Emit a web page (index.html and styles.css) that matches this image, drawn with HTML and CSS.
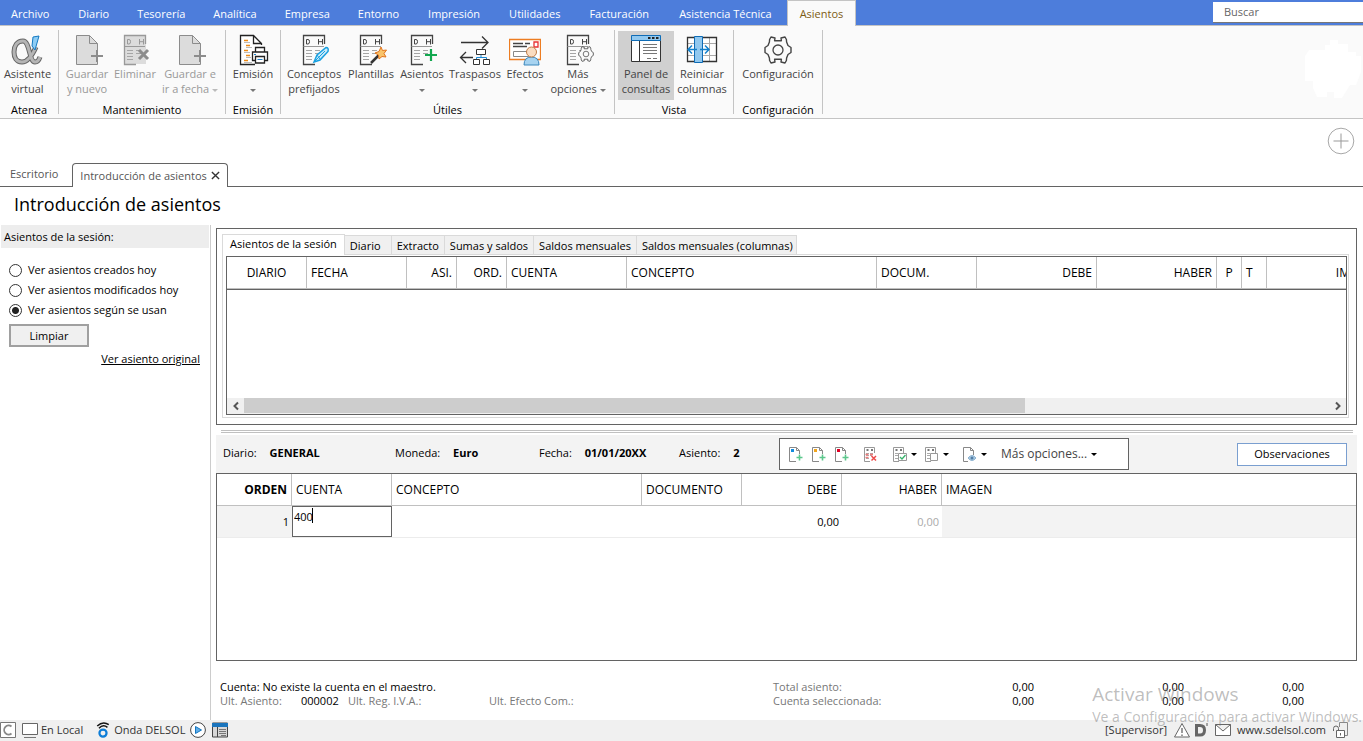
FILE: index.html
```html
<!DOCTYPE html>
<html lang="es">
<head>
<meta charset="utf-8">
<title>Introducción de asientos</title>
<link rel="stylesheet" href="styles.css">
</head>
<body>
<svg class="defs" aria-hidden="true">
  <defs>
    <symbol id="page" viewBox="0 0 32 32">
      <path d="M5.5 1.500H17.500L26.500 9.500V30.500H5.500Z" fill="#dcdcdc"/>
      <path d="M26.500 16V9.500L18.500 1.500H5.500V30.500H26.500V28M18.500 1.500V9.500H26.500" fill="none" stroke="#8c8c8c"/>
      <path d="M26 16V28M20 22H32" stroke="#8c8c8c" stroke-width="2"/>
    </symbol>
    <symbol id="ledger" viewBox="0 0 32 32">
      <path d="M26.500 10V1.500H5.500V30.500H17" fill="none" stroke="currentColor" stroke-width="1.300"/>
      <path d="M5.500 12.500H26" stroke="#999"/>
      <path d="M8.500 5.500v4.500h1.500q1.500 0 1.500-2.300t-1.500-2.200zM20.500 5v5.500M24.500 5v5.500M20.500 7.700h4" fill="none" stroke="currentColor"/>
      <path d="M8 16.500h6M8 19.500h6M8 22.500h6M8 25.500h6M17 16.500h5M17 19.500h5" stroke="#a5a5a5"/>
    </symbol>
    <symbol id="window" viewBox="0 0 32 32">
      <path d="M1.500 6.500h29v21h-29z" fill="#fff" stroke="#333"/>
      <path d="M1.500 1.500h29v5h-29z" fill="#91c8ef" stroke="#0f6cb6"/>
      <path d="M9.500 7v20" stroke="#333"/>
      <path d="M18 4h2.500M22 4h2.500M26 4h2.500" stroke="#222" stroke-width="2"/>
      <path d="M13 10.500h14M13 13.500h14M13 16.500h14M13 19.500h14M17 24.500h4M23 24.500h4" stroke="#777"/>
    </symbol>
    <symbol id="sheet" viewBox="0 0 16 16">
      <path d="M11.500 8V4.500L8.500 1.500H1.500V15.500H8M8.500 1.500V4.500H11.500" fill="#fff" stroke="#888"/>
      <path d="M11.500 8.500v6M8.500 11.500h6" stroke="#5cc78c" stroke-width="1.600"/>
      <path d="M3 3h3v3H3z" fill="currentColor"/>
    </symbol>
    <symbol id="minigrid" viewBox="0 0 16 16">
      <path d="M11.500 7V1.500H1.500V15.500H7" fill="#fff" stroke="#999"/>
      <path d="M3.500 3h2v2h-2zM8 3h2v2H8z" fill="#777"/>
      <path d="M3 7.500h3M7 7.500h3M3 9.500h3M7 9.500h2M3 12.500h3" stroke="#aaa"/>
    </symbol>
    <symbol id="gear" viewBox="-16 -16 32 32">
      <path d="M-3.400-9.300-3-12-7-13-8.400-10.500-8.600-8-10-4.500-13-2.500V2.500L-10 4.500-8.600 8-8.400 10.500-7 13-3 12-3.400 9.300H3.400L3 12 7 13 8.400 10.500 8.600 8 10 4.500 13 2.500V-2.500L10-4.500 8.600-8 8.400-10.500 7-13 3-12 3.400-9.300Z" fill="#fafafa" stroke="#444" stroke-width="1.400" stroke-linejoin="round"/>
      <circle r="5" fill="none" stroke="#444" stroke-width="1.300"/>
    </symbol>
  </defs>
</svg>

<header>
  <nav class="menu">
    <button class="file">Archivo</button><button>Diario</button><button>Tesorería</button><button>Analítica</button><button>Empresa</button><button>Entorno</button><button>Impresión</button><button>Utilidades</button><button>Facturación</button><button>Asistencia Técnica</button><button class="current">Asientos</button>
    <input class="search" type="text" placeholder="Buscar" aria-label="Buscar">
  </nav>

  <div class="ribbon">
    <section class="group g-atenea">
      <div class="tools">
        <button class="tool">
          <svg viewBox="0 0 32 32"><path d="M25 13C21 22 17 28 11 28C5 28 3 23 3 18C3 12 6 7 12 7C19 7 18 28 24 28C27 28 28 26 29 23" fill="none" stroke="#666" stroke-width="5"/><path d="M25 13C21 22 17 28 11 28C5 28 3 23 3 18C3 12 6 7 12 7C19 7 18 28 24 28C27 28 28 26 29 23" fill="none" stroke="#b5b5b5" stroke-width="3"/><path d="M22 3l6-1-4 14-3-4z" fill="#8ecdf5" stroke="#1479c2"/></svg>
          <span>Asistente<br>virtual</span></button>
      </div>
      <h2>Atenea</h2>
    </section>
    <section class="group g-mant">
      <div class="tools">
        <button class="tool off w-48"><svg><use href="#page"/></svg><span>Guardar<br>y nuevo</span></button>
        <button class="tool off w-48"><svg viewBox="0 0 32 32"><path d="M5 1h22v29H5z" fill="#dcdcdc"/><use href="#ledger"/><path d="M20 16l9 9M29 16l-9 9" stroke="#8c8c8c" stroke-width="3"/></svg><span>Eliminar</span></button>
        <button class="tool off w-62"><svg><use href="#page"/></svg><span>Guardar e<br>ir a fecha <i class="caret"></i></span></button>
      </div>
      <h2>Mantenimiento</h2>
    </section>
    <section class="group g-emision">
      <div class="tools">
        <button class="tool">
          <svg viewBox="0 0 32 32"><path d="M24.500 11V9.500L16.500 1.500H3.500V30.500H18M16.500 1.500V9.500H24.500" fill="#fff" stroke="#222" stroke-width="1.300"/><path d="M7 6.500h4M9 11.500h4M7 16.500h4M9 21.500h4M7 26.500h4" stroke="#ee8a15" stroke-width="1.400"/><path d="M7 8.500h6M9 13.500h6M7 18.500h6M9 23.500h5M7 28.500h8" stroke="#bbb"/><path d="M18.500 18v-4.500h9V18M18.500 26.500h-3v-8.500h15v8.500h-3M18.500 22.500h9v6.500h-9z" fill="#fff" stroke="#222" stroke-width="1.300"/><path d="M20.500 25.500h5M17 20.500h2" stroke="#1f83cc"/></svg>
          <span>Emisión<br><i class="caret"></i></span></button>
      </div>
      <h2>Emisión</h2>
    </section>
    <section class="group g-utiles">
      <div class="tools">
        <button class="tool w-62"><svg viewBox="0 0 32 32"><use href="#ledger"/><path d="M16 28l3-7L28 13.500q3 0 2 4L22 26z" fill="#cbeaf9" stroke="#18a0e0" stroke-width="1.500"/><path d="M19 21l3 4M16 28L27 17" stroke="#18a0e0"/></svg><span>Conceptos<br>prefijados</span></button>
        <button class="tool w-52"><svg viewBox="0 0 32 32"><use href="#ledger"/><path d="M16 29l8-8" stroke="#333" stroke-width="2.500"/><path d="M26 13l1.500 3.500 4-.5-2.500 3.500 2 3.500-4-.5-3 2.500-.5-4-3.500-2 4-1.500z" fill="#f9c46b" stroke="#e1731d"/></svg><span>Plantillas</span></button>
        <button class="tool w-50"><svg viewBox="0 0 32 32"><use href="#ledger"/><path d="M25 15v12M19 21h12" stroke="#12a84f" stroke-width="2.200"/></svg><span>Asientos<br><i class="caret"></i></span></button>
        <button class="tool w-56"><svg viewBox="0 0 32 32"><path d="M2 8.500h27M23 2.500l6 6-6 6M14 23.500H2M7 18l-5.500 5.500L7 29" fill="none" stroke="#333" stroke-width="1.300"/><path d="M17.500 15.500h9v5h-9zM14.500 25.500h6v5h-6zM24.500 25.500h6v5h-6z" fill="#fff" stroke="#333"/><path d="M22 21v2.500M17.500 25v-1.500h10V25" fill="none" stroke="#1b8ad6"/></svg><span>Traspasos<br><i class="caret"></i></span></button>
        <button class="tool w-44"><svg viewBox="0 0 32 32"><path d="M.500 5.500h31v20h-31z" fill="#fff" stroke="#ed7d22" stroke-width="1.300"/><path d="M4 9.500h10M16 9.500h5M4 12.500h14" stroke="#444" stroke-width="1.300"/><path d="M4.500 17.500h15v5h-15z" fill="none" stroke="#888"/><path d="M25 8h4v5h-4z" fill="none" stroke="#e93232" stroke-width="1.300"/><path d="M15 31q0-8 7.500-8t7.500 8z" fill="#a7d3f0" stroke="#3d88bd"/><circle cx="22.500" cy="18" r="5" fill="#fbdcc0" stroke="#c17b45"/></svg><span>Efectos<br><i class="caret"></i></span></button>
        <button class="tool w-62"><svg viewBox="0 0 32 32"><use href="#ledger"/><use href="#gear" x="15" y="11" width="18" height="18"/></svg><span>Más<br>opciones <i class="caret"></i></span></button>
      </div>
      <h2>Útiles</h2>
    </section>
    <section class="group g-vista">
      <div class="tools">
        <button class="tool pressed w-56" aria-pressed="true"><svg><use href="#window"/></svg><span>Panel de<br>consultas</span></button>
        <button class="tool w-56"><svg viewBox="0 0 32 32"><path d="M1.500 3.500h29v24h-29z" fill="#fff"/><path d="M1.500 9.500h29M1.500 21.500h29M23.500 4v23" stroke="#aaa"/><path d="M1.500 3.500h29v24h-29z" fill="none" stroke="#333" stroke-width="1.300"/><path d="M8.500 2.500h8v26h-8z" fill="#91c8ef" stroke="#0f6cb6"/><path d="M11 15.500H2.500M6 11.500l-4 4 4 4M14 15.500h8.500M19 11.500l4 4-4 4" fill="none" stroke="#1380cb" stroke-width="1.500"/></svg><span>Reiniciar<br>columnas</span></button>
      </div>
      <h2>Vista</h2>
    </section>
    <section class="group g-config">
      <div class="tools">
        <button class="tool"><svg><use href="#gear"/></svg><span>Configuración</span></button>
      </div>
      <h2>Configuración</h2>
    </section>
    <svg class="blob" viewBox="0 0 56 58"><path d="M20 5h5V0h8v4h10v8h8v4h5v16l-5 13h-6l-8 13h-8v-6H22v5H12L8 48V41H0V16l4-6h16z" fill="#fff"/></svg>
  </div>
</header>

<div class="docbar">
  <div class="doctabs">
    <button>Escritorio</button>
    <button class="current">Introducción de asientos
      <svg viewBox="0 0 10 10"><path d="M1 1l8 8M9 1L1 9" stroke="#333" stroke-width="1.500"/></svg></button>
  </div>
  <button class="add" aria-label="Añadir"><svg viewBox="0 0 28 28"><circle cx="14" cy="14" r="12.800" fill="none" stroke="#a8a8a8"/><path d="M14 6.500v15M6.500 14h15" stroke="#999"/></svg></button>
</div>

<h1>Introducción de asientos</h1>

<main>
  <aside>
    <h2>Asientos de la sesión:</h2>
    <div class="choices">
      <label><input type="radio" name="ver">Ver asientos creados hoy</label>
      <label><input type="radio" name="ver">Ver asientos modificados hoy</label>
      <label><input type="radio" name="ver" checked>Ver asientos según se usan</label>
      <button class="clear">Limpiar</button>
      <a href="#original">Ver asiento original</a>
    </div>
  </aside>

  <div class="work">
    <section class="session">
      <div class="tabs">
        <button class="current">Asientos de la sesión</button><button>Diario</button><button>Extracto</button><button>Sumas y saldos</button><button>Saldos mensuales</button><button>Saldos mensuales (columnas)</button>
      </div>
      <div class="frame">
        <div class="list">
          <table>
            <colgroup><col class="c80"><col class="c100"><col class="c50"><col class="c50"><col class="c120"><col class="c250"><col class="c100"><col class="c120"><col class="c120"><col class="c25"><col class="c25"><col class="c120"></colgroup>
            <thead><tr><th class="mid">DIARIO</th><th>FECHA</th><th class="num">ASI.</th><th class="num">ORD.</th><th>CUENTA</th><th>CONCEPTO</th><th>DOCUM.</th><th class="num">DEBE</th><th class="num">HABER</th><th class="mid">P</th><th>T</th><th class="num">IMAGEN</th></tr></thead>
          </table>
          <div class="scroll">
            <button aria-label="Izquierda"><svg viewBox="0 0 10 10"><path d="M7 1.500L3.500 5 7 8.500" fill="none" stroke="#555" stroke-width="2"/></svg></button>
            <div class="track"><div class="thumb"></div></div>
            <button aria-label="Derecha"><svg viewBox="0 0 10 10"><path d="M3 1.500L6.500 5 3 8.500" fill="none" stroke="#555" stroke-width="2"/></svg></button>
          </div>
        </div>
      </div>
    </section>
    <div class="splitter"></div>

    <section class="info">
      <p class="f-diario">Diario: <b>GENERAL</b></p>
      <p class="f-moneda">Moneda: <b>Euro</b></p>
      <p class="f-fecha">Fecha: <b>01/01/20XX</b></p>
      <p class="f-asiento">Asiento: <b>2</b></p>
      <div class="toolbox">
        <button aria-label="Nuevo apunte"><svg class="blue"><use href="#sheet"/></svg></button>
        <button aria-label="Insertar apunte"><svg class="amber"><use href="#sheet"/></svg></button>
        <button class="gap" aria-label="Añadir asiento"><svg class="red"><use href="#sheet"/></svg></button>
        <button class="gap" aria-label="Eliminar apunte"><svg viewBox="0 0 16 16"><use href="#minigrid"/><path d="M2.500 8.500h3M2.500 11.500h3M7 8.500h3" stroke="#f07a7a" stroke-width="1.500"/><path d="M8.500 10l4.500 4.500M13 10l-4.500 4.500" stroke="#ee4b4b" stroke-width="1.500"/></svg></button>
        <button class="drop" aria-label="Punteo"><svg viewBox="0 0 16 16"><use href="#minigrid"/><path d="M6.500 7.500h8v7h-8z" fill="#fff" stroke="#999"/><path d="M8 11l2 2 3.500-4" fill="none" stroke="#35b36b" stroke-width="1.300"/></svg><i class="caret"></i></button>
        <button class="drop" aria-label="Marcas"><svg viewBox="0 0 16 16"><use href="#minigrid"/><path d="M6.500 7.500h7v7h-7z" fill="#fff" stroke="#999"/></svg><i class="caret"></i></button>
        <button class="drop last" aria-label="Ver documento"><svg viewBox="0 0 16 16"><path d="M11.500 9V4.500L8.500 1.500H1.500V15.500H6M8.500 1.500V4.500H11.500" fill="#fff" stroke="#888"/><path d="M6 12q4-5 8 0-4 5-8 0z" fill="#a9cbe4" stroke="#8db2d0"/><circle cx="10" cy="12" r="1.500" fill="#527da5"/></svg><i class="caret"></i></button>
        <button class="more">Más opciones... <i class="caret"></i></button>
      </div>
      <button class="notes">Observaciones</button>
    </section>

    <section class="editor">
      <table>
        <colgroup><col class="c75"><col class="c100"><col class="c250"><col class="c100"><col class="c100"><col class="c100"><col></colgroup>
        <thead><tr><th class="num strong">ORDEN</th><th>CUENTA</th><th>CONCEPTO</th><th>DOCUMENTO</th><th class="num">DEBE</th><th class="num">HABER</th><th>IMAGEN</th></tr></thead>
        <tbody><tr><td class="num shade">1</td><td class="edit"><input type="text" value="400" aria-label="Cuenta"><span class="cursor"></span></td><td></td><td></td><td class="num">0,00</td><td class="num dim">0,00</td><td class="shade"></td></tr></tbody>
      </table>
    </section>

    <section class="summary">
      <div class="last-values">
        <p class="black">Cuenta: No existe la cuenta en el maestro.</p>
        <p class="row"><span class="s1">Ult. Asiento:</span><span class="s2 black">000002</span><span class="s3">Ult. Reg. I.V.A.:</span><span>Ult. Efecto Com.:</span></p>
      </div>
      <div class="totals">
        <span>Total asiento:</span><output>0,00</output><output>0,00</output><output>0,00</output>
        <span>Cuenta seleccionada:</span><output>0,00</output><output>0,00</output><output>0,00</output>
      </div>
    </section>
  </div>
</main>

<footer>
  <svg viewBox="0 0 16 16"><path d="M.500.500h15v15H.500z" fill="#fff" stroke="#777"/><path d="M11.500 4.500A4.500 4.500 0 1 0 11.500 11.500" fill="none" stroke="#888" stroke-width="1.800"/></svg>
  <svg class="second" viewBox="0 0 16 16"><path d="M.500 1.500h15v11H.500z" fill="#fff" stroke="#666"/><path d="M2 15.500h12" stroke="#777"/></svg>
  <span class="local">En Local</span>
  <svg viewBox="0 0 16 18"><circle cx="8" cy="12.500" r="4" fill="none" stroke="#0d7dd7" stroke-width="2.500"/><path d="M1.500 4.500Q8-1.500 14.500 3M3.500 7Q8 2 13 6" fill="none" stroke="#111" stroke-width="1.700"/></svg>
  <span>Onda DELSOL</span>
  <svg class="play" viewBox="0 0 16 16"><circle cx="8" cy="8" r="7.400" fill="#fff" stroke="#444"/><path d="M5.500 4.500v7l6-3.500z" fill="#5eaee9" stroke="#1475bf"/></svg>
  <svg class="second" viewBox="0 0 16 16"><path d="M.500 1h15v14H.500z" fill="#d8d8d8" stroke="#444"/><path d="M0 1h16v4H0z" fill="#1b75bd"/><path d="M5.500 5v10" stroke="#444"/><path d="M7 7.500h7M7 9.500h7M7 11.500h7M9 13.500h5" stroke="#777"/></svg>
  <span class="user">[Supervisor]</span>
  <svg viewBox="0 0 16 16"><path d="M8 1.500L15.500 15H.500z" fill="#fff" stroke="#666"/><path d="M8 6v5M8 12.500v1.500" stroke="#666" stroke-width="1.300"/></svg>
  <svg viewBox="0 0 16 16"><path d="M3.500 3.500h3.500q4.500 0 4.500 4.800T7 13H3.500z" fill="none" stroke="#666" stroke-width="3"/><path d="M14 1v3" stroke="#888" stroke-width="1.500"/></svg>
  <svg class="mail" viewBox="0 0 16 16"><path d="M.500 2.500h15v11H.500zM.500 2.500L8 9l7.500-6.500" fill="#fff" stroke="#666"/></svg>
  <a href="#web">www.sdelsol.com</a>
  <svg viewBox="0 0 16 16"><path d="M6.500 5V.500h8v13H11" fill="#eee" stroke="#888"/><path d="M3.500 8.500h8v7h-8z" fill="#fff" stroke="#666"/><path d="M.500 9V6.500a2.500 2.500 0 0 1 5 0V8M7.500 11v2.500" fill="none" stroke="#666"/></svg>
</footer>

<div class="watermark"><strong>Activar Windows</strong><span>Ve a Configuración para activar Windows.</span></div>
</body>
</html>
```
FILE: styles.css
```css
* { box-sizing: border-box; }
body {
  margin: 0;
  height: 100vh;
  position: relative;
  display: flex;
  flex-direction: column;
  background: #fff;
  color: #000;
  font: 11px/14px "Open Sans", "Noto Sans", sans-serif;
  overflow: hidden;
}
h1, h2, p { margin: 0; font-weight: 400; }
h2 { font-size: 11px; }
button { margin: 0; padding: 0; border: 0; background: none; font: inherit; color: inherit; }
input { font: inherit; }
svg { display: block; flex: none; }
a { color: inherit; }
.defs { position: absolute; width: 0; height: 0; }
.caret {
  display: inline-block;
  border: 3px solid transparent;
  border-top-color: currentColor;
  border-bottom: 0;
  vertical-align: middle;
}

/* menu */
.menu { display: flex; height: 26px; background: #4d7ddb; border-bottom: 1px solid #c4c4c4; color: #fff; }
.menu button { padding: 2px 14px 0; white-space: nowrap; }
.menu button:nth-child(n+7) { padding-left: 15px; }
.menu button:nth-child(n+9) { padding-right: 15px; }
.menu .file { padding: 2px 15px 0 11px; }
.menu .current.current {
  height: 26px;
  padding: 0 12px;
  border: 1px solid #c4c4c4;
  border-bottom: 0;
  background: #fafafa;
  color: #7d5c14;
}
.search {
  width: 150px;
  height: 21px;
  margin: 2px 0 0 auto;
  padding: 0 11px 2px;
  border: 0;
  border-bottom: 1px solid #777;
  background: #fff;
}
.search::placeholder { color: #666; opacity: 1; }

/* ribbon */
.ribbon { display: flex; height: 93px; padding: 4px 0; background: #fafafa; border-bottom: 1px solid #c4c4c4; }
.group { display: flex; flex-direction: column; justify-content: space-between; border-right: 1px solid #c4c4c4; }
.group h2 { text-align: center; line-height: 8px; }
.g-atenea { width: 59px; }
.g-atenea .tools, .g-utiles .tools { padding-right: 3px; }
.g-mant { width: 167px; }
.g-emision { width: 55px; }
.g-utiles { width: 334px; }
.g-vista { width: 119px; }
.g-config { width: 89px; }
.tools { display: flex; justify-content: center; padding-top: 1px; }
.tool {
  display: flex;
  flex-direction: column;
  align-items: center;
  height: 69px;
  padding-top: 3px;
  line-height: 15px;
  color: #444;
  white-space: nowrap;
}
.tool svg { width: 32px; height: 32px; }
.tool .caret { color: #777; }
.off { color: #999; }
.off .caret { color: #bbb; }
.pressed { background: #d0d0d0; }
.w-44 { width: 44px; }
.w-48 { width: 48px; }
.w-50 { width: 50px; }
.w-52 { width: 52px; }
.w-56 { width: 56px; }
.w-62 { width: 62px; }
.blob { width: 56px; height: 58px; margin: 10px 2px 0 auto; }

/* document tabs */
.docbar { display: flex; justify-content: space-between; height: 68px; border-bottom: 1px solid #636363; }
.doctabs { display: flex; align-items: flex-end; color: #555; }
.doctabs button { height: 24px; padding: 0 14px 0 10px; }
.doctabs .current {
  display: flex;
  align-items: center;
  gap: 4px;
  height: 24px;
  margin-bottom: -1px;
  padding: 0 7px;
  border: 1px solid #636363;
  border-bottom: 0;
  border-radius: 4px 4px 0 0;
  background: #fff;
}
.doctabs svg { width: 9px; height: 9px; }
.add { align-self: flex-start; margin: 8px 8px 0 0; }
.add svg { width: 28px; height: 28px; }
h1 { padding: 4px 14px 8px; font-size: 18px; line-height: 26px; }

main { flex: 1; display: flex; min-height: 0; }
aside { width: 211px; flex: none; border-right: 1px solid #ccc; }
aside h2 { height: 23px; margin: 0 1px; padding-left: 3px; line-height: 23px; background: #ededed; }
.choices { display: flex; flex-direction: column; padding: 12px 10px 0 9px; }
.choices label { display: flex; align-items: center; gap: 6px; height: 20px; }
.choices input {
  appearance: none;
  width: 13px;
  height: 13px;
  margin: 0;
  border: 1px solid #333;
  border-radius: 50%;
  background: #fff;
}
.choices input:checked { background: radial-gradient(circle, #222 0 3px, #fff 4px); }
.clear { width: 80px; height: 23px; margin-top: 4px; border: 2px solid #a0a0a0; background: #f0f0f0; }
.choices a { align-self: flex-end; margin-top: 5px; }

.work { flex: 1; min-width: 0; display: flex; flex-direction: column; padding: 3px 6px 0 5px; }

/* tables */
table { width: 100%; table-layout: fixed; border-collapse: separate; border-spacing: 0; }
th { height: 32px; padding: 0 4px; border: 0 solid #c0c0c0; border-width: 0 1px 1px 0; font-size: 12px; font-weight: 400; text-align: left; }
td { height: 32px; padding: 0 3px; }
.num { text-align: right; }
.mid { text-align: center; }
.strong { font-weight: 700; }
.shade { background: #f3f3f3; }
.dim { color: #aaa; }
.c25 { width: 25px; }
.c50 { width: 50px; }
.c75 { width: 75px; }
.c80 { width: 80px; }
.c100 { width: 100px; }
.c120 { width: 120px; }
.c250 { width: 250px; }

/* session entries */
.session { display: flex; flex-direction: column; flex: none; height: 197px; padding: 5px 7px 6px 5px; border: 1px solid #636363; }
.tabs { display: flex; align-items: flex-end; }
.tabs button { height: 19px; padding: 1px 5px 0; border: 1px solid #dadada; border-width: 1px 1px 0 0; background: #f0f0f0; white-space: nowrap; }
.tabs button:nth-child(2) { padding: 1px 10px 0 5px; }
.tabs button:last-child { padding: 1px 3px 0 5px; }
.tabs .current { height: 21px; margin-bottom: -1px; padding: 0 7px 2px; border-left-width: 1px; background: #fff; z-index: 1; }
.frame { flex: 1; min-height: 0; padding: 1px 1px 2px 3px; border: 1px solid #dadada; }
.list { display: flex; flex-direction: column; justify-content: space-between; height: 100%; border: 1px solid #636363; overflow: hidden; }
.list table { width: 1160px; border-bottom: 1px solid #636363; }
.scroll { display: flex; height: 16px; background: #f0f0f0; }
.scroll button { display: flex; justify-content: center; align-items: center; width: 17px; }
.scroll svg { width: 10px; height: 10px; }
.track { flex: 1; }
.thumb { width: 72%; height: 15px; background: #cdcdcd; }
.splitter { flex: none; height: 3px; margin: 5px 4px 2px 5px; border: 1px solid #c0c0c0; border-width: 1px 0; }

/* entry header */
.info { display: flex; align-items: center; flex: none; height: 38px; padding: 0 10px 0 7px; background: #f3f3f3; }
.info p { padding-bottom: 2px; white-space: nowrap; }
.info b { margin-left: 10px; }
.f-diario { width: 172px; }
.f-moneda { width: 144px; }
.f-fecha { width: 140px; }
.f-asiento { width: 100px; }
.toolbox { display: flex; align-items: center; width: 350px; height: 32px; padding-left: 8px; border: 1px solid #636363; background: #fff; }
.toolbox svg { width: 16px; height: 16px; }
.toolbox button { display: flex; align-items: center; gap: 3px; margin-right: 7px; color: #000; }
.toolbox .gap { margin-right: 13px; }
.toolbox .drop { margin-right: 4px; gap: 3px; padding-right: 3px; }
.toolbox .drop.last { margin-right: 11px; margin-left: 6px; }
.toolbox .more { gap: 4px; color: #444; font-size: 12px; }
.toolbox .more .caret { color: #000; }
.blue { color: #118bdd; }
.amber { color: #f2a51c; }
.red { color: #e00024; }
.notes { width: 110px; height: 23px; margin-left: auto; border: 1px solid #7a9fd0; background: #fff; }

/* entry editor */
.editor { flex: 1; min-height: 0; border: 1px solid #636363; }
.editor th:last-child { border-right: 0; }
.editor td { border-bottom: 1px solid #ececec; }
.editor .edit { position: relative; padding: 0; }
.edit input { display: block; width: 100px; height: 31px; padding: 0 1px 11px; border: 1px solid #636363; outline: 0; background: #fff; }
.cursor { position: absolute; left: 20px; top: 2px; width: 1px; height: 15px; background: #000; }

/* summary */
.summary { display: flex; flex: none; height: 59px; padding: 19px 4px 0; color: #777; }
.black { color: #000; }
.last-values { flex: 1; white-space: nowrap; }
.row { display: flex; }
.s1 { width: 81px; }
.s2 { width: 47px; }
.s3 { width: 141px; }
.totals { display: grid; grid-template-columns: 201px 60px 150px 120px; grid-auto-rows: 14px; margin-right: 49px; white-space: nowrap; }
.totals output { text-align: right; color: #000; }

/* status bar */
footer { display: flex; align-items: center; flex: none; height: 21px; padding: 0 11px 2px 0; background: #f0f0f0; color: #333; }
footer svg { width: 16px; height: 16px; margin-right: 3px; }
footer a { text-decoration: none; margin-right: 7px; }
.second { margin-left: 3px; }
.local { margin-right: 12px; }
.play { margin: 0 3px 0 5px; }
.user { margin: 0 7px 0 auto; }
.mail { margin: 0 6px 0 3px; }

.watermark { position: absolute; right: 1px; bottom: 14px; display: flex; flex-direction: column; color: rgba(110, 110, 110, 0.45); font-size: 14px; line-height: 20px; white-space: nowrap; pointer-events: none; }
.watermark strong { font-size: 19px; font-weight: 400; line-height: 26px; }
```
